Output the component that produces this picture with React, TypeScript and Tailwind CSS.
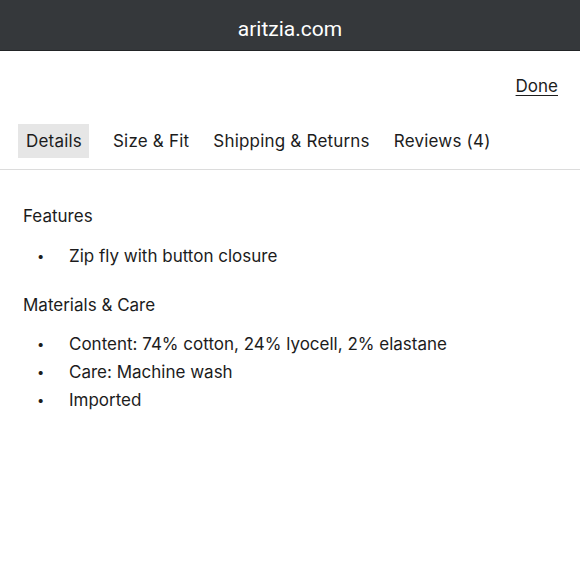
import React from "react";

export default function App() {
  const font = { fontFamily: "Inter, 'Open Sans', sans-serif" };
  return (
    <div className="w-[580px] h-[580px] bg-white text-[#1c1c1c] overflow-hidden" style={font}>
      <div className="h-[51px] bg-[#35383b] border-b border-[#222426] flex items-center justify-center">
        <span className="text-white text-[21px] pt-[9px]" style={{ fontFamily: "Roboto, sans-serif" }}>aritzia.com</span>
      </div>
      <div className="flex justify-end pr-[22px] pt-[23px] h-[73px]">
        <span className="text-[17px] underline underline-offset-[3px] leading-[24px]">Done</span>
      </div>
      <div className="flex items-center pl-[18px] gap-[24px] h-[34px] text-[17px] tracking-[0.2px]">
        <div className="bg-[#e6e6e6] h-[34px] pl-[8px] pr-[7px] flex items-center pt-[2px]">Details</div>
        <div className="pt-[2px]">Size &amp; Fit</div>
        <div className="pt-[2px]">Shipping &amp; Returns</div>
        <div className="pt-[2px]">Reviews (4)</div>
      </div>
      <div className="mt-[11px] border-t border-[#dcdcdc]" />
      <div className="pl-[23px] pt-[34px] text-[17px]">
        <div className="leading-[24px]">Features</div>
        <ul className="mt-[14px]">
          <li className="flex leading-[28px]"><span className="w-[46px] pl-[14px] text-[13px]">•</span>Zip fly with button closure</li>
        </ul>
        <div className="leading-[24px] mt-[23px]">Materials &amp; Care</div>
        <ul className="mt-[13px]">
          <li className="flex leading-[28px]"><span className="w-[46px] pl-[14px] text-[13px]">•</span>Content: 74% cotton, 24% lyocell, 2% elastane</li>
          <li className="flex leading-[28px]"><span className="w-[46px] pl-[14px] text-[13px]">•</span>Care: Machine wash</li>
          <li className="flex leading-[28px]"><span className="w-[46px] pl-[14px] text-[13px]">•</span>Imported</li>
        </ul>
      </div>
    </div>
  );
}
